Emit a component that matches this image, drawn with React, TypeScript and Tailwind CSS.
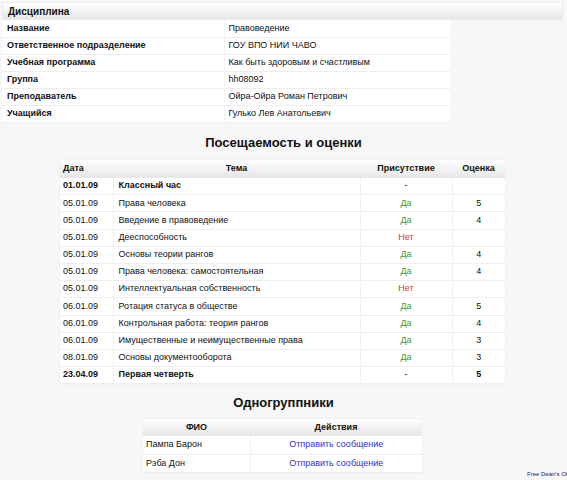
import React from "react";

const info: [string, string][] = [
  ["Название", "Правоведение"],
  ["Ответственное подразделение", "ГОУ ВПО НИИ ЧАВО"],
  ["Учебная программа", "Как быть здоровым и счастливым"],
  ["Группа", "hh08092"],
  ["Преподаватель", "Ойра-Ойра Роман Петрович"],
  ["Учащийся", "Гулько Лев Анатольевич"],
];

type Row = { d: string; t: string; p: string; g: string; b?: boolean };
const rows: Row[] = [
  { d: "01.01.09", t: "Классный час", p: "-", g: "", b: true },
  { d: "05.01.09", t: "Права человека", p: "Да", g: "5" },
  { d: "05.01.09", t: "Введение в правоведение", p: "Да", g: "4" },
  { d: "05.01.09", t: "Дееспособность", p: "Нет", g: "" },
  { d: "05.01.09", t: "Основы теории рангов", p: "Да", g: "4" },
  { d: "05.01.09", t: "Права человека: самостоятельная", p: "Да", g: "4" },
  { d: "05.01.09", t: "Интеллектуальная собственность", p: "Нет", g: "" },
  { d: "06.01.09", t: "Ротация статуса в обществе", p: "Да", g: "5" },
  { d: "06.01.09", t: "Контрольная работа: теория рангов", p: "Да", g: "4" },
  { d: "06.01.09", t: "Имущественные и неимущественные права", p: "Да", g: "3" },
  { d: "08.01.09", t: "Основы документооборота", p: "Да", g: "3" },
  { d: "23.04.09", t: "Первая четверть", p: "-", g: "5", b: true },
];

const mates = ["Пампа Барон", "Рэба Дон"];

const hdr = "bg-gradient-to-b from-white to-[#e6e6e6]";

export default function App() {
  return (
    <div
      className="w-[567px] h-[480px] bg-[#f7f7f7] text-[#111] text-[9px] overflow-hidden relative"
      style={{ fontFamily: '"Liberation Sans", Arial, sans-serif' }}
    >
      <div className="pt-[2px] px-[2px]">
        <div className={`h-[18px] w-[561px] ${hdr} font-bold text-[10px] leading-[18px] pl-[5px] border border-[#ececec]`}>
          Дисциплина
        </div>
        <table className="w-[448px] bg-white border-collapse">
          <tbody>
            {info.map(([k, v]) => (
              <tr key={k} className="h-[17px] border-b border-[#eeeeee]">
                <td className="w-[222px] pl-[5px] font-bold align-middle">{k}</td>
                <td className="pl-[4px] align-middle border-l border-[#f2f2f2]">{v}</td>
              </tr>
            ))}
          </tbody>
        </table>
      </div>

      <div className="text-center font-bold text-[13px] mt-[12px] mb-[9px] leading-[16px]">
        Посещаемость и оценки
      </div>

      <table className="ml-[60px] w-[445px] bg-white border-collapse shadow-[0_0_1px_rgba(0,0,0,0.15)]">
        <thead>
          <tr className={`h-[18px] ${hdr}`}>
            <th className="w-[53px] text-left pl-[3px] font-bold">Дата</th>
            <th className="w-[247px] font-bold">Тема</th>
            <th className="w-[92px] font-bold">Присутствие</th>
            <th className="font-bold">Оценка</th>
          </tr>
        </thead>
        <tbody>
          {rows.map((r, i) => (
            <tr key={i} className={`h-[17.2px] border-b border-[#eeeeee] ${r.b ? "font-bold" : ""}`}>
              <td className="pl-[3px] border-r border-[#f0f0f0]">{r.d}</td>
              <td className="pl-[5px] border-r border-[#f0f0f0]">{r.t}</td>
              <td
                className={`text-center border-r border-[#f0f0f0] font-normal ${
                  r.p === "Да" ? "text-[#3a9a3a]" : r.p === "Нет" ? "text-[#d03a3a]" : ""
                }`}
              >
                {r.p}
              </td>
              <td className="text-center">{r.g}</td>
            </tr>
          ))}
        </tbody>
      </table>

      <div className="text-center font-bold text-[13px] mt-[11px] mb-[8px] leading-[16px]">
        Одногруппники
      </div>

      <table className="ml-[143px] w-[279px] bg-white border-collapse shadow-[0_0_1px_rgba(0,0,0,0.15)]">
        <thead>
          <tr className={`h-[17px] ${hdr}`}>
            <th className="w-[107px] font-bold">ФИО</th>
            <th className="font-bold">Действия</th>
          </tr>
        </thead>
        <tbody>
          {mates.map((m) => (
            <tr key={m} className="h-[18px] border-b border-[#eeeeee]">
              <td className="pl-[3px] border-r border-[#f0f0f0]">{m}</td>
              <td className="text-center text-[#3333bb]">Отправить сообщение</td>
            </tr>
          ))}
        </tbody>
      </table>

      <div className="absolute left-[527px] bottom-[2px] text-[6px] leading-[8px] text-[#22226a] whitespace-nowrap">
        Free Dean's Office
      </div>
    </div>
  );
}
